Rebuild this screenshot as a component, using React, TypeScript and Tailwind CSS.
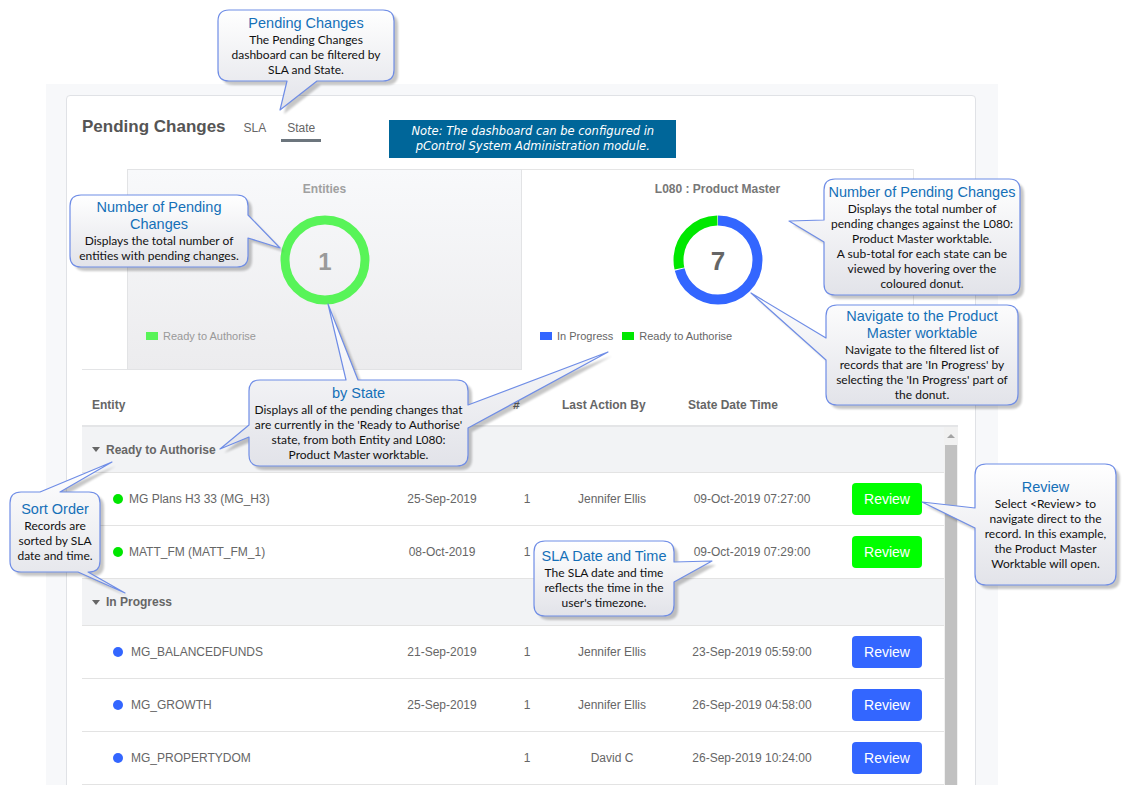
import React from 'react';

type Tail = { edge: 'top' | 'right' | 'bottom' | 'left'; a: number; b: number; tip: [number, number] };
type Balloon = {
  x: number;
  y: number;
  w: number;
  h: number;
  box: string;
  title: string[];
  body: string[];
  tails: Tail[];
};

const balloons: Balloon[] = [
  {
    x: 218, y: 10, w: 176, h: 71,
    box: 'left-[218px] top-[10px] w-[176px] h-[71px]',
    title: ['Pending Changes'],
    body: ['The Pending Changes', 'dashboard can be filtered by', 'SLA and State.'],
    tails: [{ edge: 'bottom', a: 287, b: 317, tip: [280, 110] }],
  },
  {
    x: 70, y: 195, w: 178, h: 72,
    box: 'left-[70px] top-[195px] w-[178px] h-[72px]',
    title: ['Number of Pending', 'Changes'],
    body: ['Displays the total number of', 'entities with pending changes.'],
    tails: [{ edge: 'right', a: 215, b: 238, tip: [280, 248] }],
  },
  {
    x: 824, y: 179, w: 196, h: 116,
    box: 'left-[824px] top-[179px] w-[196px] h-[116px]',
    title: ['Number of Pending Changes'],
    body: [
      'Displays the total number of',
      'pending changes against the L080:',
      'Product Master worktable.',
      'A sub-total for each state can be',
      'viewed by hovering over the',
      'coloured donut.',
    ],
    tails: [{ edge: 'left', a: 220, b: 242, tip: [789, 221] }],
  },
  {
    x: 826, y: 305, w: 192, h: 100,
    box: 'left-[826px] top-[305px] w-[192px] h-[100px]',
    title: ['Navigate to the Product', 'Master worktable'],
    body: [
      'Navigate to the filtered list of',
      "records that are 'In Progress' by",
      "selecting the 'In Progress' part of",
      'the donut.',
    ],
    tails: [{ edge: 'left', a: 338, b: 360, tip: [751, 293] }],
  },
  {
    x: 249, y: 380, w: 219, h: 86,
    box: 'left-[249px] top-[380px] w-[219px] h-[86px]',
    title: ['by State'],
    body: [
      'Displays all of the pending changes that',
      "are currently in the 'Ready to Authorise'",
      'state, from both Entity and L080:',
      'Product Master worktable.',
    ],
    tails: [
      { edge: 'top', a: 346, b: 358, tip: [328, 304] },
      { edge: 'right', a: 405, b: 428, tip: [608, 352] },
      { edge: 'left', a: 425, b: 437, tip: [220, 449] },
    ],
  },
  {
    x: 10, y: 492, w: 90, h: 80,
    box: 'left-[10px] top-[492px] w-[90px] h-[80px]',
    title: ['Sort Order'],
    body: ['Records are', 'sorted by SLA', 'date and time.'],
    tails: [
      { edge: 'top', a: 40, b: 60, tip: [112, 462] },
      { edge: 'bottom', a: 78, b: 88, tip: [125, 593] },
    ],
  },
  {
    x: 534, y: 541, w: 140, h: 75,
    box: 'left-[534px] top-[541px] w-[140px] h-[75px]',
    title: ['SLA Date and Time'],
    body: ['The SLA date and time', 'reflects the time in the', "user's timezone."],
    tails: [{ edge: 'right', a: 562, b: 582, tip: [712, 561] }],
  },
  {
    x: 975, y: 464, w: 141, h: 121,
    box: 'left-[975px] top-[464px] w-[141px] h-[121px]',
    title: ['Review'],
    body: ['Select <Review> to', 'navigate direct to the', 'record. In this example,', 'the Product Master', 'Worktable will open.'],
    tails: [{ edge: 'left', a: 508, b: 528, tip: [922, 502] }],
  },
];

function balloonPath({ x, y, w, h, tails }: Balloon, r = 11) {
  const R = x + w;
  const B = y + h;
  const on = (e: Tail['edge']) => tails.filter((t) => t.edge === e);
  const tip = (t: Tail) => `${t.tip[0]},${t.tip[1]}`;
  let d = `M${x + r},${y}`;
  on('top').sort((p, q) => p.a - q.a).forEach((t) => { d += ` L${t.a},${y} L${tip(t)} L${t.b},${y}`; });
  d += ` L${R - r},${y} Q${R},${y} ${R},${y + r}`;
  on('right').sort((p, q) => p.a - q.a).forEach((t) => { d += ` L${R},${t.a} L${tip(t)} L${R},${t.b}`; });
  d += ` L${R},${B - r} Q${R},${B} ${R - r},${B}`;
  on('bottom').sort((p, q) => q.a - p.a).forEach((t) => { d += ` L${t.b},${B} L${tip(t)} L${t.a},${B}`; });
  d += ` L${x + r},${B} Q${x},${B} ${x},${B - r}`;
  on('left').sort((p, q) => q.a - p.a).forEach((t) => { d += ` L${x},${t.b} L${tip(t)} L${x},${t.a}`; });
  d += ` L${x},${y + r} Q${x},${y} ${x + r},${y} Z`;
  return d;
}

const groups = [
  {
    label: 'Ready to Authorise',
    dot: 'bg-[#00e600]',
    btn: 'bg-[#00ff00]',
    gap: 'gap-[6px]',
    height: 'h-[46px]',
    rows: [
      ['MG Plans H3 33 (MG_H3)', '25-Sep-2019', '1', 'Jennifer Ellis', '09-Oct-2019 07:27:00'],
      ['MATT_FM (MATT_FM_1)', '08-Oct-2019', '1', 'Jennifer Ellis', '09-Oct-2019 07:29:00'],
    ],
  },
  {
    label: 'In Progress',
    dot: 'bg-[#3366ff]',
    btn: 'bg-[#3366ff]',
    gap: 'gap-[8px]',
    height: 'h-[47px]',
    rows: [
      ['MG_BALANCEDFUNDS', '21-Sep-2019', '1', 'Jennifer Ellis', '23-Sep-2019 05:59:00'],
      ['MG_GROWTH', '25-Sep-2019', '1', 'Jennifer Ellis', '26-Sep-2019 04:58:00'],
      ['MG_PROPERTYDOM', '', '1', 'David C', '26-Sep-2019 10:24:00'],
    ],
  },
];

const C = 2 * Math.PI * 39.5;

function Callouts() {
  return (
    <>
      <svg className="pointer-events-none absolute left-0 top-0" width={1129} height={795}>
        <defs>
          <linearGradient id="bf" x1="0" y1="0" x2="0" y2="1">
            <stop offset="0" stopColor="#ffffff" />
            <stop offset="1" stopColor="#e2e3e9" />
          </linearGradient>
          <filter id="sh" x="-10%" y="-10%" width="120%" height="120%">
            <feGaussianBlur stdDeviation="1.2" />
          </filter>
        </defs>
        {balloons.map((b) => (
          <g key={b.box}>
            <path d={balloonPath(b)} transform="translate(4,4)" fill="#000" opacity={0.22} filter="url(#sh)" />
            <path d={balloonPath(b)} fill="url(#bf)" stroke="#6f8de6" strokeWidth={1.2} strokeLinejoin="round" />
          </g>
        ))}
      </svg>
      {balloons.map((b) => (
        <div key={b.box} className={`absolute ${b.box} flex flex-col items-center justify-center whitespace-nowrap text-center`}>
          {b.title.map((t) => (
            <div key={t} className="text-[14.5px] leading-[17px] text-[#1570b8]">{t}</div>
          ))}
          {b.body.map((t) => (
            <div key={t} className="font-['Lato',sans-serif] text-[12px] leading-[15px] text-[#111]">{t}</div>
          ))}
        </div>
      ))}
    </>
  );
}

export default function App() {
  return (
    <div className="relative h-[795px] w-[1129px] overflow-hidden bg-white font-['Liberation_Sans',Arial,sans-serif]">
      <div className="ml-[46px] mt-[84px] h-[701px] w-[952px] overflow-hidden bg-[#f7f8fa] pl-[20px] pt-[11px]">
        <div className="h-[760px] w-[910px] rounded-[4px] border border-[#e0e2e6] bg-white pl-[15px] pt-[18px]">
          {/* header */}
          <div className="flex h-[44px] items-start">
            <h1 className="text-[17px] font-bold leading-[26px] text-[#555]">Pending Changes</h1>
            <div className="ml-[12px] mt-[6px] border-b-[3px] border-transparent px-[6px] pb-[3px] text-[12px] leading-[16px] text-[#666]">SLA</div>
            <div className="ml-[9px] mt-[6px] border-b-[3px] border-[#6c757d] px-[6px] pb-[3px] text-[12px] leading-[16px] text-[#666]">State</div>
            <div className="ml-[68px] mt-[6px] flex h-[38px] w-[287px] flex-col items-center justify-center bg-[#006699] font-['DejaVu_Sans',Verdana,sans-serif] text-[11.5px] italic leading-[15px] text-white">
              <span>Note: The dashboard can be configured in</span>
              <span>pControl System Administration module.</span>
            </div>
          </div>

          {/* charts */}
          <div className="mt-[11px] flex h-[201px]">
            <div className="w-[45px] border-b border-[#e3e4e6]" />
            <div className="flex w-[395px] flex-col items-center border border-[#e2e3e5] bg-gradient-to-b from-[#f8f9fb] to-[#ececee] pt-[11px]">
              <div className="text-[12px] font-bold leading-[16px] text-[#a0a0a0]">Entities</div>
              <svg className="mt-[18px]" width={90} height={90} viewBox="0 0 90 90">
                <circle cx={45} cy={45} r={40} fill="none" stroke="#58f458" strokeWidth={9} />
                <text x={45} y={46} textAnchor="middle" dominantBaseline="central" fontFamily="Liberation Sans, Arial, sans-serif" fontWeight={700} fontSize={24} fill="#9a9a9a">1</text>
              </svg>
              <div className="mt-[24px] flex items-center gap-[5px] self-start pl-[18px] text-[11px] leading-[14px] text-[#999]">
                <span className="h-[8px] w-[12px] bg-[#58f458]" />
                Ready to Authorise
              </div>
            </div>
            <div className="flex w-[392px] flex-col items-center border-r border-t border-[#e5e5e5] bg-white pt-[11px]">
              <div className="text-[12px] font-bold leading-[16px] text-[#777]">L080 : Product Master</div>
              <svg className="mt-[18px]" width={90} height={90} viewBox="0 0 90 90">
                <g transform="rotate(-90 45 45)">
                  <circle cx={45} cy={45} r={39.5} fill="none" stroke="#3366ff" strokeWidth={10} strokeDasharray={`${(C * 5) / 7 - 1} ${C}`} />
                  <circle cx={45} cy={45} r={39.5} fill="none" stroke="#00e800" strokeWidth={10} strokeDasharray={`${(C * 2) / 7 - 1} ${C}`} strokeDashoffset={-(C * 5) / 7} />
                </g>
                <text x={45} y={46} textAnchor="middle" dominantBaseline="central" fontFamily="Liberation Sans, Arial, sans-serif" fontWeight={700} fontSize={26} fill="#666">7</text>
              </svg>
              <div className="mt-[24px] flex items-center self-start pl-[18px] text-[11px] leading-[14px] text-[#666]">
                <span className="mr-[5px] h-[8px] w-[12px] bg-[#3366ff]" />
                In Progress
                <span className="ml-[9px] mr-[5px] h-[8px] w-[12px] bg-[#00e800]" />
                Ready to Authorise
              </div>
            </div>
          </div>

          {/* table */}
          <div className="w-[876px]">
            <div className="flex h-[57px] items-end border-b-2 border-[#e4e5e7] pb-[12px] text-[12px] font-bold leading-[16px] text-[#666]">
              <span className="w-[431px] pl-[10px]">Entity</span>
              <span className="w-[49px]">#</span>
              <span className="w-[126px]">Last Action By</span>
              <span>State Date Time</span>
            </div>
            <div className="flex">
              <div className="w-[862px]">
                {groups.map((g) => (
                  <div key={g.label}>
                    <div className={`flex ${g.height} items-center border-b border-[#e3e3e3] bg-[#f2f3f5] pl-[10px]`}>
                      <span className="h-0 w-0 border-l-[4px] border-r-[4px] border-t-[5px] border-l-transparent border-r-transparent border-t-[#666]" />
                      <span className="ml-[6px] text-[12px] font-bold text-[#666]">{g.label}</span>
                    </div>
                    {g.rows.map((r) => (
                      <div key={r[0]} className="flex h-[53px] items-center border-b border-[#e3e3e3] text-[12px] text-[#666]">
                        <div className={`flex w-[318px] items-center ${g.gap} pl-[31px]`}>
                          <span className={`h-[10px] w-[10px] rounded-full ${g.dot}`} />
                          {r[0]}
                        </div>
                        <div className="w-[84px] text-center">{r[1]}</div>
                        <div className="w-[86px] text-center">{r[2]}</div>
                        <div className="w-[84px] text-center">{r[3]}</div>
                        <div className="w-[196px] text-center">{r[4]}</div>
                        <button className={`ml-[2px] h-[32px] w-[70px] rounded-[4px] ${g.btn} text-[14px] text-white`}>Review</button>
                      </div>
                    ))}
                  </div>
                ))}
              </div>
              <div className="flex w-[14px] flex-col bg-[#f1f1f1]">
                <div className="flex h-[18px] items-center justify-center">
                  <span className="h-0 w-0 border-b-[4px] border-l-[4px] border-r-[4px] border-b-[#a3a3a3] border-l-transparent border-r-transparent" />
                </div>
                <div className="mx-[1px] h-[400px] bg-[#c1c1c1]" />
              </div>
            </div>
          </div>
        </div>
      </div>
      <Callouts />
    </div>
  );
}
